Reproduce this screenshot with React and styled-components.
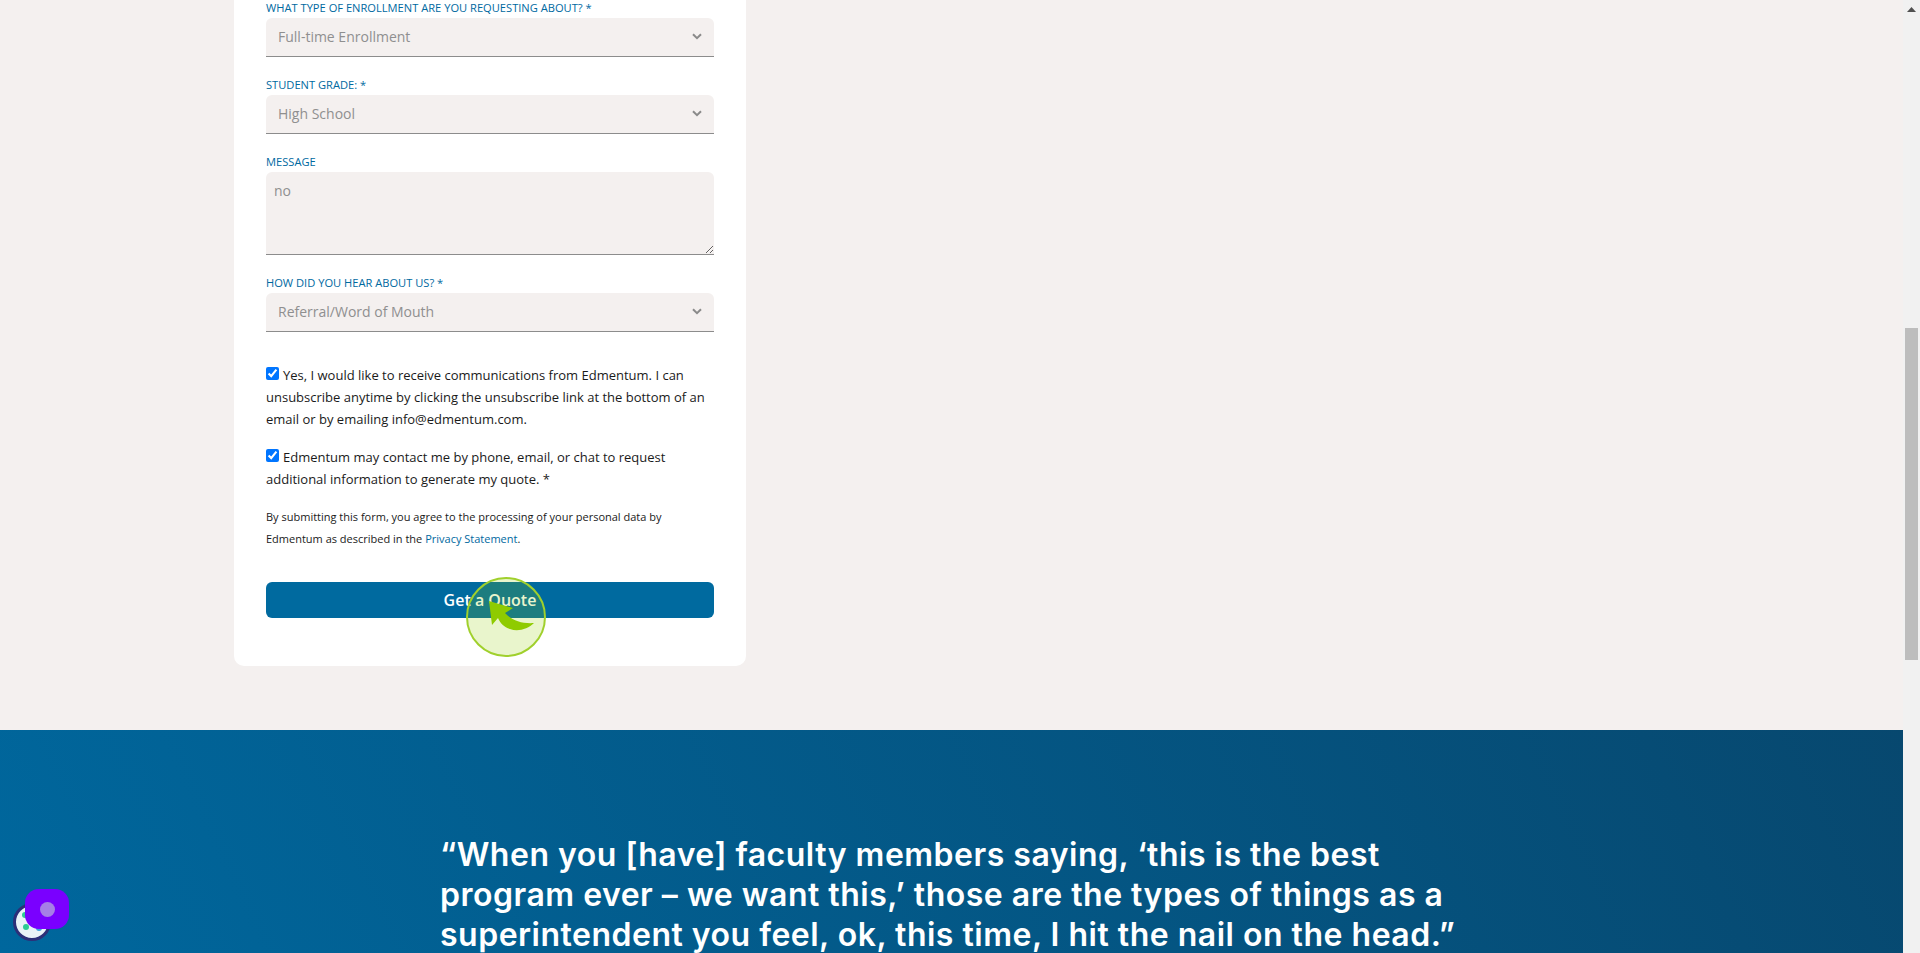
import React from 'react'
import styled, { createGlobalStyle } from 'styled-components'

const GlobalStyle = createGlobalStyle`
    html, body {
        margin: 0;
        height: 953px;
        overflow: hidden;
        background: #f4f0ef;
    }
    * {
        box-sizing: border-box;
    }
`

const Chevron = () => (
    <ChevronIcon viewBox="0 0 10 7">
        <path d="M1 1.2 L5 5.2 L9 1.2" fill="none" stroke="#8a8a8a" strokeWidth="2" />
    </ChevronIcon>
)

const SelectField = ({ label, value }) => (
    <Field>
        <Label>{label}</Label>
        <SelectWrap>
            <Select defaultValue={value}>
                <option>{value}</option>
            </Select>
            <Chevron />
        </SelectWrap>
    </Field>
)

const App = () => {
    return (
        <>
            <GlobalStyle />
            <Page>
                <Main>
                    <Card>
                        <SelectField label="What type of enrollment are you requesting about? *" value="Full-time Enrollment" />
                        <SelectField label="Student grade: *" value="High School" />
                        <Field>
                            <Label>Message</Label>
                            <TextArea defaultValue="no" />
                        </Field>
                        <SelectField label="How did you hear about us? *" value="Referral/Word of Mouth" />

                        <Consent>
                            <Check type="checkbox" defaultChecked />
                            Yes, I would like to receive communications from Edmentum. I can unsubscribe anytime by clicking the unsubscribe link at the bottom of an email or by emailing info@edmentum.com.
                        </Consent>
                        <Consent>
                            <Check type="checkbox" defaultChecked />
                            Edmentum may contact me by phone, email, or chat to request additional information to generate my quote. *
                        </Consent>
                        <Legal>
                            By submitting this form, you agree to the processing of your personal data by Edmentum as described in the <a href="#">Privacy Statement</a>.
                        </Legal>
                        <Submit type="button">Get a Quote</Submit>
                    </Card>

                    <Banner>
                        <Quote>
                            “When you [have] faculty members saying, ‘this is the best program ever – we want this,’ those are the types of things as a superintendent you feel, ok, this time, I hit the nail on the head.”
                        </Quote>
                    </Banner>
                </Main>

                <Scrollbar>
                    <ScrollArrow viewBox="0 0 9 5">
                        <path d="M4.5 0 L9 5 L0 5 Z" fill="#505050" />
                    </ScrollArrow>
                    <ScrollThumb />
                </Scrollbar>

                <ClickMarker>
                    <svg width="80" height="80" viewBox="0 0 80 80">
                        <path d="M23 24 L47 31 L39 36 C45 43 56 47 68 46 C62 52 52 55 44 52 C38 50 34 46 32 41 L26 48 Z" fill="#8fcb00" />
                    </svg>
                </ClickMarker>

                <ChatWidget>
                    <ChatBadge>
                        <svg width="38" height="38" viewBox="0 0 38 38">
                            <circle cx="19" cy="19" r="17.500" fill="#e9f3f7" stroke="#2c2f78" strokeWidth="3" />
                            <circle cx="13" cy="24" r="3" fill="#2ecb95" />
                            <circle cx="12" cy="12" r="3" fill="#2ecb95" />
                            <circle cx="26" cy="25" r="3" fill="#3aa0dc" />
                        </svg>
                    </ChatBadge>
                    <ChatButton>
                        <ChatDot />
                    </ChatButton>
                </ChatWidget>
            </Page>
        </>
    )
}

const Page = styled.div`
    position: relative;
    display: flex;
    width: 1920px;
    height: 953px;
    overflow: hidden;
    font-family: "Open Sans", "Liberation Sans", sans-serif;
`
const Main = styled.div`
    flex: 1;
    min-width: 0;
    display: flex;
    flex-direction: column;
`
const Card = styled.form`
    flex-shrink: 0;
    width: 512px;
    height: 666px;
    margin-left: 234px;
    padding: 0 32px;
    background: #fff;
    border-radius: 0 0 10px 10px;
`
const Field = styled.div`
    margin-bottom: 20px;
`
const Label = styled.label`
    display: block;
    height: 18px;
    font-size: 11.13px;
    line-height: 16px;
    text-transform: uppercase;
    color: #00699f;
`
const SelectWrap = styled.div`
    position: relative;
`
const Select = styled.select`
    display: block;
    width: 100%;
    height: 39px;
    padding: 0 12px 2px;
    appearance: none;
    border: 0;
    border-bottom: 1px solid #8c8c8c;
    border-radius: 6px 6px 0 0;
    background: #f4f0ef;
    font-family: inherit;
    font-size: 14px;
    color: #8f8f8f;
`
const ChevronIcon = styled.svg`
    position: absolute;
    top: 15px;
    right: 12px;
    width: 10px;
    height: 7px;
`
const TextArea = styled.textarea`
    display: block;
    width: 100%;
    height: 83px;
    padding: 9px 8px;
    border: 0;
    border-bottom: 1px solid #8c8c8c;
    border-radius: 6px 6px 0 0;
    background: #f4f0ef;
    font-family: inherit;
    font-size: 14px;
    color: #8f8f8f;
    outline: none;
`
const Consent = styled.label`
    display: block;
    margin-bottom: 16px;
    font-size: 13px;
    line-height: 22px;
    color: #1a1a1a;
    &:first-of-type {
        margin-top: 32px;
    }
`
const Check = styled.input`
    width: 13px;
    height: 13px;
    margin: 0 4px 0 0;
`
const Legal = styled.p`
    margin: 0 0 32px;
    font-size: 11px;
    line-height: 22px;
    color: #1a1a1a;
    a {
        color: #00699f;
        text-decoration: none;
    }
`
const Submit = styled.button`
    display: block;
    width: 100%;
    height: 36px;
    border: 0;
    border-radius: 6px;
    background: #006a9f;
    font-family: inherit;
    font-size: 16px;
    font-weight: 600;
    color: #fff;
`
const Banner = styled.section`
    margin-top: 64px;
    flex: 1;
    padding: 105px 0 0 440px;
    background: linear-gradient(65deg, #00679d 0%, #07486f 100%);
`
const Quote = styled.p`
    width: 1040px;
    margin: 0;
    font-family: Inter, "Open Sans", sans-serif;
    font-size: 32px;
    font-weight: 600;
    letter-spacing: 0.5px;
    line-height: 40px;
    color: #fff;
`
const Scrollbar = styled.div`
    width: 17px;
    flex-shrink: 0;
    padding: 5px 2px 0;
    background: #f1f1f1;
`
const ScrollArrow = styled.svg`
    display: block;
    width: 9px;
    height: 5px;
    margin: 2px auto 0;
`
const ScrollThumb = styled.div`
    width: 13px;
    height: 332px;
    margin-top: 316px;
    background: #bdbdbd;
`
const ClickMarker = styled.div`
    position: absolute;
    left: 466px;
    top: 577px;
    width: 80px;
    height: 80px;
    border: 2px solid #a0d02c;
    border-radius: 50%;
    background: rgba(143, 203, 0, 0.2);
    svg {
        display: block;
        margin: -2px;
    }
`
const ChatWidget = styled.div`
    position: absolute;
    left: 13px;
    top: 889px;
    width: 56px;
    height: 52px;
`
const ChatBadge = styled.div`
    position: absolute;
    left: 0;
    top: 14px;
    svg {
        display: block;
    }
`
const ChatButton = styled.div`
    position: absolute;
    left: 12px;
    top: 0;
    display: flex;
    align-items: center;
    justify-content: center;
    width: 44px;
    height: 40px;
    border-radius: 14px;
    background: #7a00ff;
`
const ChatDot = styled.div`
    width: 15px;
    height: 15px;
    border-radius: 50%;
    background: #a67fe6;
`

export default App
